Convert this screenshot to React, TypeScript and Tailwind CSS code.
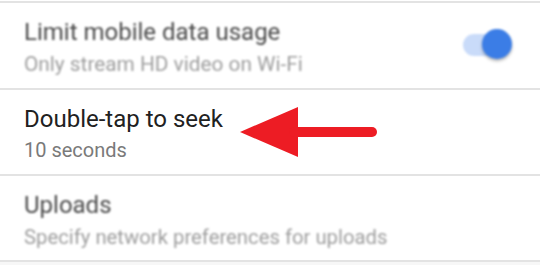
import React from "react";

function Row({
  title,
  subtitle,
  dim,
  right,
  subSize,
}: {
  title: string;
  subtitle: string;
  dim?: boolean;
  right?: React.ReactNode;
  subSize?: string;
}) {
  return (
    <div className="flex h-[84px] items-start justify-between pl-6 pr-[28px]">
      <div className={dim ? "blur-[0.8px] pt-[15px]" : "pt-[15px]"}>
        <div
          className={
            "text-[24px] leading-[28px] " +
            (dim ? "text-[#4a4a4a]" : "text-[#212121]")
          }
        >
          {title}
        </div>
        <div
          className={
            (subSize ?? "text-[20px]") +
            " leading-[24px] " +
            (dim ? "mt-[6px] text-[#9e9e9e]" : "mt-[5px] text-[#7a7a7a]")
          }
        >
          {subtitle}
        </div>
      </div>
      {right}
    </div>
  );
}

function Divider() {
  return <div className="h-[2px] bg-[#e3e3e3] blur-[0.3px]" />;
}

export default function App() {
  return (
    <div
      className="relative h-[265px] w-[540px] overflow-hidden bg-white"
      style={{ fontFamily: "Roboto, 'Noto Sans', sans-serif" }}
    >
      <div className="h-px" />
      <Divider />
      <div className="h-[85px]">
        <Row
          title="Limit mobile data usage"
          subtitle="Only stream HD video on Wi-Fi"
          subSize="text-[20.8px]"
          dim
          right={
            <div className="relative mt-[26px] h-[34px] w-[50px] blur-[0.8px]">
              <div className="absolute left-[1px] top-[5px] h-[22px] w-[44px] rounded-full bg-[#c9dbf9]" />
              <div className="absolute right-0 top-0 h-[30px] w-[30px] rounded-full bg-[#3b7de6] shadow-[0_2px_3px_rgba(0,0,0,0.3)]" />
            </div>
          }
        />
      </div>
      <Divider />
      <Row title="Double-tap to seek" subtitle="10 seconds" />
      <Divider />
      <Row
        title="Uploads"
        subtitle="Specify network preferences for uploads"
        subSize="text-[20.3px]"
        dim
      />
      <Divider />
      <div className="h-[3px] bg-[#f7f7f7]" />

      <svg
        className="absolute left-[236px] top-[104px]"
        width="148"
        height="56"
        viewBox="0 0 148 56"
      >
        <polygon points="4,28 62,3 62,53" fill="#ed1c24" />
        <line
          x1="58"
          y1="28"
          x2="136"
          y2="28"
          stroke="#ed1c24"
          strokeWidth="10"
          strokeLinecap="round"
        />
      </svg>
    </div>
  );
}
